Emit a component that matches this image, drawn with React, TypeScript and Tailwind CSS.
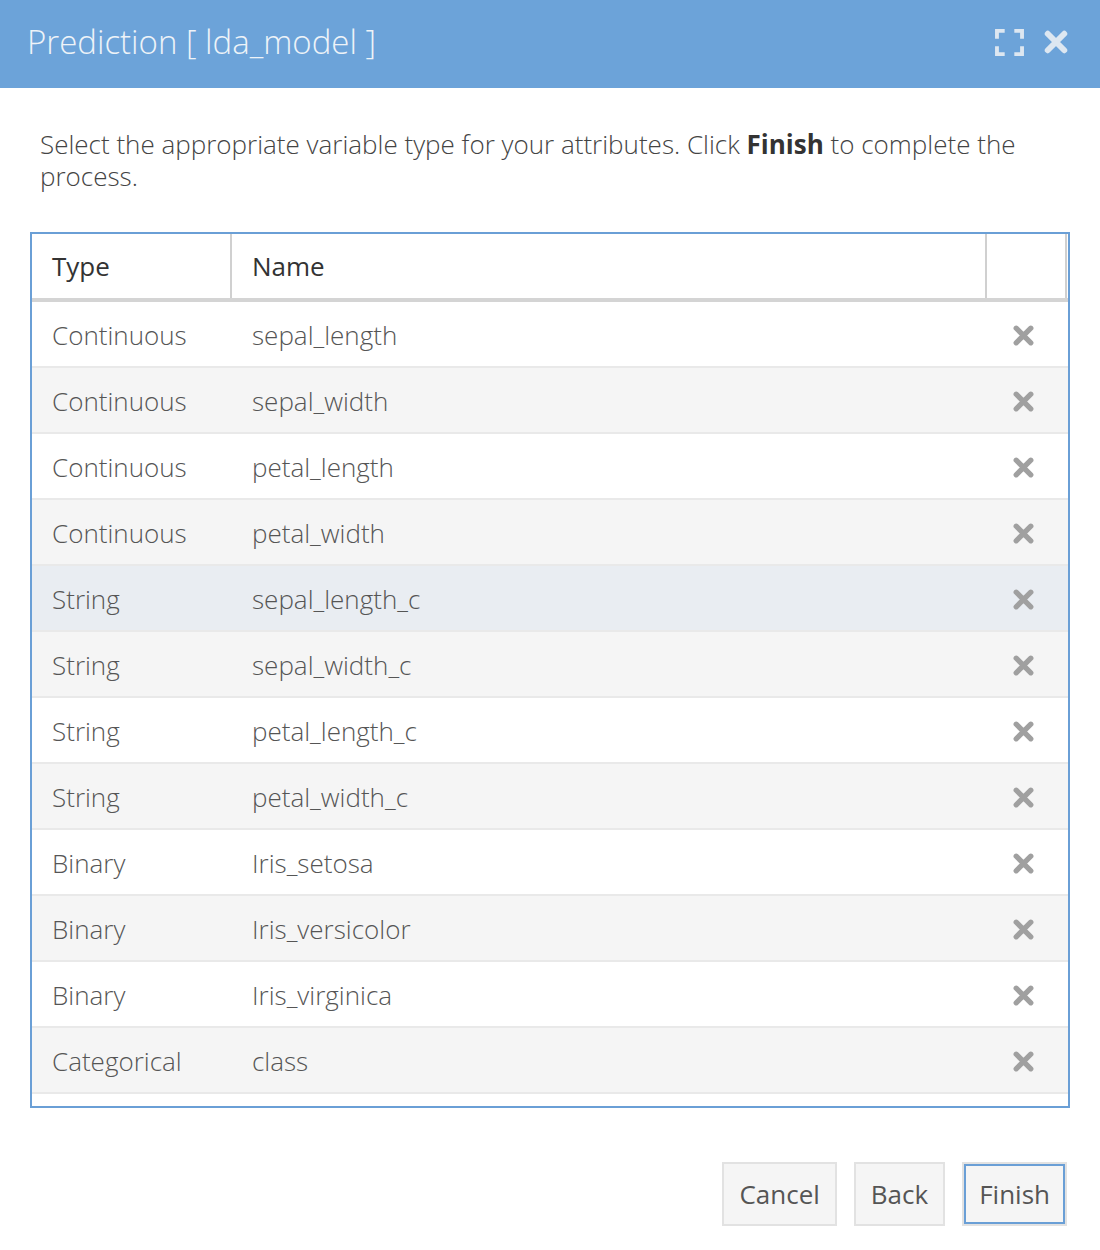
const ROWS: { type: string; name: string }[] = [
  { type: "Continuous", name: "sepal_length" },
  { type: "Continuous", name: "sepal_width" },
  { type: "Continuous", name: "petal_length" },
  { type: "Continuous", name: "petal_width" },
  { type: "String", name: "sepal_length_c" },
  { type: "String", name: "sepal_width_c" },
  { type: "String", name: "petal_length_c" },
  { type: "String", name: "petal_width_c" },
  { type: "Binary", name: "Iris_setosa" },
  { type: "Binary", name: "Iris_versicolor" },
  { type: "Binary", name: "Iris_virginica" },
  { type: "Categorical", name: "class" },
];

function Times({ className }: { className?: string }) {
  return (
    <svg viewBox="0 0 22 22" className={className} fill="none">
      <path
        d="M4 4 L18 18 M18 4 L4 18"
        stroke="currentColor"
        strokeWidth="5"
        strokeLinecap="round"
      />
    </svg>
  );
}

function Expand() {
  return (
    <svg viewBox="0 0 30 28" className="h-[27px] w-[29px]" fill="none">
      <path
        d="M2 10 V2 H10 M20 2 H28 V10 M28 18 V26 H20 M10 26 H2 V18"
        stroke="currentColor"
        strokeWidth="4"
      />
    </svg>
  );
}

function Btn({ label, primary }: { label: string; primary?: boolean }) {
  return (
    <button
      className={
        "h-[64px] border-2 border-[#e2e2e2] bg-[#f5f5f5] px-[15px] text-[26px] text-[#555] " +
        (primary ? "shadow-[inset_0_0_0_2px_#6a9fd6]" : "")
      }
    >
      {label}
    </button>
  );
}

export default function App() {
  return (
    <div
      className="min-h-[1250px] w-[1100px] bg-white"
      style={{ fontFamily: '"Open Sans", "Liberation Sans", sans-serif' }}
    >
      {/* Header */}
      <div className="flex h-[88px] items-center justify-between bg-[#6ca3d9] pb-[4px] pl-[27px] pr-[31px]">
        <h1 className="text-[33px] font-light text-[#eef3f8]">Prediction [ lda_model ]</h1>
        <div className="flex items-center gap-[19px] text-[#dde7f1]">
          <Expand />
          <Times className="h-[26px] w-[26px]" />
        </div>
      </div>

      <div className="px-[30px] pt-[40px]">
        <p className="px-[10px] text-[26px] font-light leading-[32px] text-[#444]">
          Select the appropriate variable type for your attributes. Click{" "}
          <strong className="font-bold text-[#333]">Finish</strong> to complete the process.
        </p>

        {/* Table */}
        <div className="mt-[40px] h-[876px] overflow-hidden border-2 border-[#6a9fd6]">
          <div className="flex h-[68px] border-b-4 border-[#d4d4d4] pr-[1px] text-[26px] text-[#333]">
            <div className="flex w-[200px] items-center border-r-2 border-[#d0d0d0] pl-[20px]">Type</div>
            <div className="flex flex-1 items-center border-r-2 border-[#d0d0d0] pl-[20px]">Name</div>
            <div className="w-[80px] border-r-2 border-[#d0d0d0]" />
          </div>
          {ROWS.map((r, i) => (
            <div
              key={r.name}
              className={
                "flex h-[66px] items-center border-b-2 border-[#e9e9e9] pt-[3px] text-[26px] font-light text-[#555] " +
                (i === 4 ? "bg-[#e9edf2]" : i % 2 === 1 ? "bg-[#f5f5f5]" : "bg-white")
              }
            >
              <div className="w-[200px] pl-[20px]">{r.type}</div>
              <div className="flex-1 pl-[20px]">{r.name}</div>
              <div className="flex w-[80px] justify-start pl-[24px] text-[#a0a0a0]">
                <Times className="h-[23px] w-[23px]" />
              </div>
            </div>
          ))}
        </div>

        <div className="mt-[54px] flex justify-end gap-[17px] pr-[3px]">
          <Btn label="Cancel" />
          <Btn label="Back" />
          <Btn label="Finish" primary />
        </div>
      </div>
    </div>
  );
}
